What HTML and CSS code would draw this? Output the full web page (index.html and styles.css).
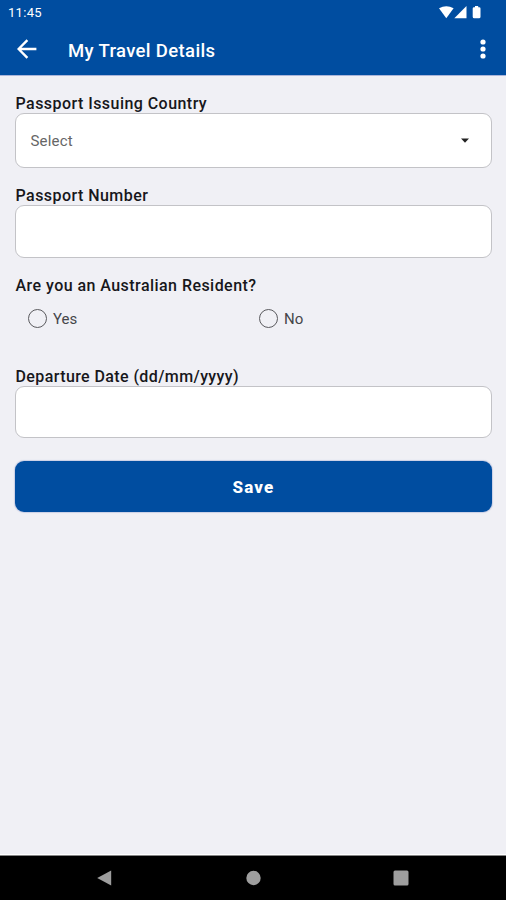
FILE: index.html
```html
<!DOCTYPE html>
<html lang="en">
<head>
  <meta charset="UTF-8">
  <meta name="viewport" content="width=device-width, initial-scale=1.0">
  <title>My Travel Details</title>
  <link rel="stylesheet" href="styles.css">
</head>
<body>
  <header>
    <div class="status-bar">
      <span class="time">11:45</span>
      <svg class="status-icons" width="42" height="14" viewBox="0 0 42 14" fill="#fff">
        <path d="M0 2.200Q7.300-1.800 14.600 2.200L7.300 12.200Z"/>
        <path d="M27.500 0V12.200H15.300Z"/>
        <path d="M36 0h3.200v1.200h1q1.300 0 1.300 1.300v8.200q0 1.500-1.500 1.500h-4.800q-1.500 0-1.500-1.500V2.500q0-1.300 1.300-1.300h1z"/>
      </svg>
    </div>
    <div class="app-bar">
      <svg class="back" width="20" height="20" viewBox="0 0 20 20" fill="none" stroke="#fff" stroke-width="2.400">
        <path d="M19.400 10H2.200M10.400 1.200L1.600 10l8.800 8.800"/>
      </svg>
      <h1>My Travel Details</h1>
      <svg class="more" width="6" height="20" viewBox="0 0 6 20" fill="#fff">
        <circle cx="3" cy="3" r="2.600"/>
        <circle cx="3" cy="10" r="2.600"/>
        <circle cx="3" cy="17" r="2.600"/>
      </svg>
    </div>
  </header>
  <main>
    <div class="field country">
      <label>Passport Issuing Country</label>
      <div class="box select">
        <span>Select</span>
        <svg width="8" height="5" viewBox="0 0 8 5"><path d="M0 .5h8L4 4.800z" fill="#222"/></svg>
      </div>
    </div>
    <div class="field passport">
      <label for="passportNumber">Passport Number</label>
      <input class="box" type="text" id="passportNumber">
    </div>
    <div class="field resident">
      <label>Are you an Australian Resident?</label>
      <div class="radios">
        <label class="radio"><input type="radio" name="resident"><span>Yes</span></label>
        <label class="radio"><input type="radio" name="resident"><span>No</span></label>
      </div>
    </div>
    <div class="field departure">
      <label for="departureDate">Departure Date (dd/mm/yyyy)</label>
      <input class="box" type="text" id="departureDate">
    </div>
    <button class="save">Save</button>
  </main>
  <nav>
    <svg width="16" height="16" viewBox="0 0 16 16"><path d="M15.200.5v15L1.200 8z"/></svg>
    <svg width="16" height="16" viewBox="0 0 16 16"><circle cx="8.500" cy="8" r="7.200"/></svg>
    <svg width="16" height="16" viewBox="0 0 16 16"><rect x=".5" y=".5" width="15" height="15" rx="1.500"/></svg>
  </nav>
</body>
</html>
```
FILE: styles.css
```css
* { box-sizing: border-box; }
body { margin: 0; height: 900px; display: flex; flex-direction: column; overflow: hidden; background: #f0f0f5; font-family: Roboto, "Liberation Sans", sans-serif; color: #17171b; }
header { height: 75px; background: #004da0; color: #fff; flex: none; box-shadow: 0 1px 0 #aab5da; }
.status-bar { display: flex; justify-content: space-between; height: 25px; padding: 6px 25px 0 8px; }
.time { font-size: 13px; line-height: 14px; letter-spacing: 0.3px; }
.app-bar { display: flex; align-items: center; height: 50px; padding: 0 20px 0 17px; }
h1 { margin: 2px 0 0 31px; font-size: 18.5px; font-weight: 550; line-height: 24px; letter-spacing: 0.35px; flex: 1; }
.back, .more { margin-bottom: 2px; }
main { flex: 1; padding: 18px 14px 0 15px; display: flex; flex-direction: column; }
.field { display: flex; flex-direction: column; }
.field > label { height: 20px; padding-left: 0.5px; font-size: 16px; font-weight: 550; line-height: 22px; letter-spacing: 0.45px; }
.box { width: 100%; height: 53px; border: 1px solid #c3c3c7; border-radius: 9px; background: #fff; outline: none; padding: 0 15px; font: inherit; }
.country { height: 92px; }
.select { display: flex; align-items: center; justify-content: space-between; height: 55px; padding: 0 22px 0 14.5px; font-size: 15px; letter-spacing: 0.2px; color: #666; }
.passport { height: 90px; }
.resident { height: 91px; }
.radios { display: flex; margin-top: 13px; padding-left: 13px; }
.radio { display: flex; align-items: center; width: 231px; height: 20px; font-size: 15px; color: #46464a; }
.radio span { padding-top: 2px; }
.radio input { appearance: none; width: 19px; height: 19px; margin: 0 6px 0 0; border: 1.5px solid #5a5a5e; border-radius: 50%; }
.departure { height: 95px; }
.departure > label { letter-spacing: 0.4px; }
.departure .box { height: 52px; }
.save { height: 51px; border: 0; border-radius: 9px; background: #004da0; color: #fff; font: 800 17px Roboto, "Liberation Sans", sans-serif; letter-spacing: 1.2px; box-shadow: 0 0 1px 1px #c9cfe6; }
nav { display: flex; align-items: center; justify-content: space-between; height: 45px; padding: 0 97px 0 96px; background: #000; border-top: 1px solid #858585; box-shadow: 0 -1px 0 #fff; }
nav svg { fill: #9e9e9e; }
```
